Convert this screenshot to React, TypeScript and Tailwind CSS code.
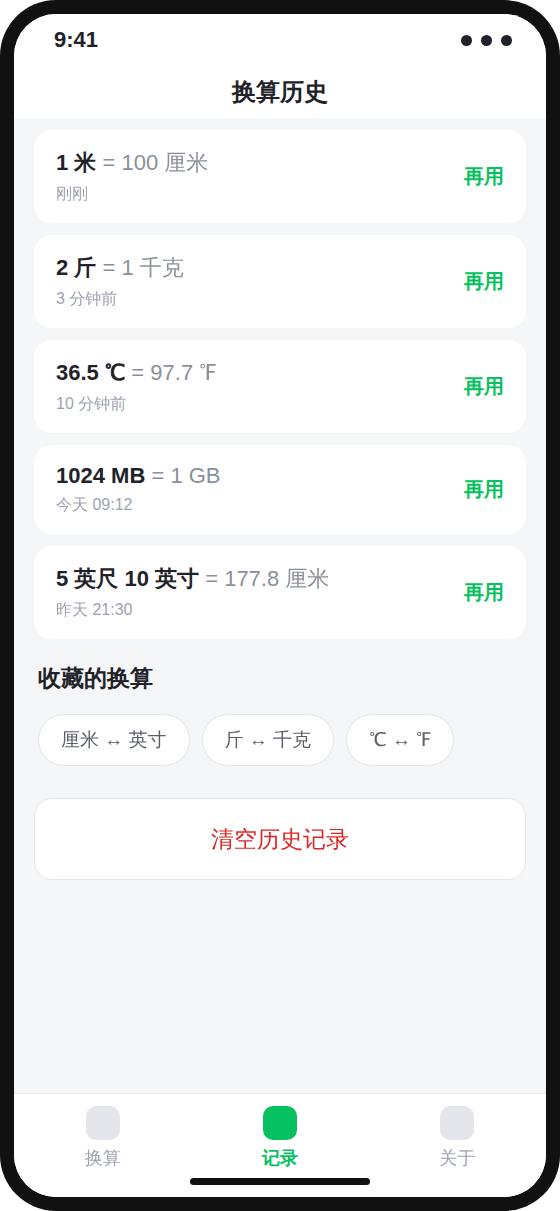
import React from "react";

const records = [
  { from: "1 米", to: "100 厘米", time: "刚刚" },
  { from: "2 斤", to: "1 千克", time: "3 分钟前" },
  { from: "36.5", unit: "℃", to: "97.7 ℉", time: "10 分钟前" },
  { from: "1024 MB", to: "1 GB", time: "今天 09:12" },
  { from: "5 英尺 10 英寸", to: "177.8 厘米", time: "昨天 21:30" },
];

const favorites = ["厘米 ↔ 英寸", "斤 ↔ 千克", "℃ ↔ ℉"];

const tabs = [
  { label: "换算", active: false },
  { label: "记录", active: true },
  { label: "关于", active: false },
];

const StatusBar = () => {
  return (
    <div className="flex h-[52px] items-center justify-between pl-10 pr-[34px]">
      <span className="text-[22px] font-semibold leading-[normal]">9:41</span>
      <div className="flex gap-[9px]">
        <span className="size-[11px] rounded-full bg-[#1f2329]" />
        <span className="size-[11px] rounded-full bg-[#1f2329]" />
        <span className="size-[11px] rounded-full bg-[#1f2329]" />
      </div>
    </div>
  );
};

type RecordProps = { from: string; unit?: string; to: string; time: string };

const RecordCard = ({ from, unit, to, time }: RecordProps) => {
  return (
    <div className="flex items-center justify-between rounded-[18px] bg-white px-[22px] py-[18px]">
      <div>
        <p className="font-['Liberation_Sans','WenQuanYi_Zen_Hei',sans-serif] text-[22px] leading-[normal] text-[#8a8f99]">
          <b className="font-['Liberation_Sans',sans-serif] font-bold text-[#1f2329]">
            {from}
            {unit && (
              <span className="font-['Liberation_Sans','WenQuanYi_Zen_Hei',sans-serif] [-webkit-text-stroke:0.9px]">
                {" "}
                {unit}
              </span>
            )}
          </b>{" "}
          = {to}
        </p>
        <p className="mt-1.5 font-['Liberation_Sans','WenQuanYi_Zen_Hei',sans-serif] text-base leading-[normal] text-[#9ca3af]">
          {time}
        </p>
      </div>
      <button className="text-xl font-semibold leading-[normal] text-[#07c160]">再用</button>
    </div>
  );
};

const App = () => {
  return (
    <div className="h-[1211px] w-[560px] rounded-[56px] bg-[#111] p-[14px] font-['Liberation_Sans',sans-serif] leading-[normal] text-[#1f2329]">
      <div className="flex h-full flex-col overflow-hidden rounded-[42px] bg-[#f5f6f8]">
        <header className="h-[104px] bg-white">
          <StatusBar />
          <h1 className="flex h-[52px] items-center justify-center text-2xl font-semibold leading-[normal]">换算历史</h1>
        </header>

        <main className="flex-1 px-5 pt-3">
          <div className="flex flex-col gap-3">
            {records.map((record) => (
              <RecordCard key={record.from} {...record} />
            ))}
          </div>

          <h2 className="mt-[22px] px-1 text-[23px] font-semibold leading-[34px]">收藏的换算</h2>
          <div className="mt-[19px] flex gap-3 px-1 font-['Liberation_Sans','WenQuanYi_Zen_Hei',sans-serif]">
            {favorites.map((item) => (
              <span
                key={item}
                className="flex h-[52px] items-center rounded-full border border-[#e5e6eb] bg-white px-[22px] text-[19px] text-[#5a5f69]"
              >
                {item}
              </span>
            ))}
          </div>

          <button className="mt-8 h-[82px] w-full rounded-[18px] border border-[#e5e6eb] bg-white font-['Liberation_Sans','WenQuanYi_Zen_Hei',sans-serif] text-[23px] text-[#dc2626]">
            清空历史记录
          </button>
        </main>

        <nav className="relative flex h-[104px] border-t border-[#ebedf0] bg-white pt-3">
          {tabs.map((tab) => (
            <div key={tab.label} className="flex flex-1 flex-col items-center gap-[5px]">
              <span className={`size-[34px] rounded-[10px] ${tab.active ? "bg-[#07c160]" : "bg-[#e5e6eb]"}`} />
              <span
                className={`text-[18px] leading-[27px] ${
                  tab.active
                    ? "font-semibold text-[#07c160]"
                    : "font-['Liberation_Sans','WenQuanYi_Zen_Hei',sans-serif] text-[#9ca3af]"
                }`}
              >
                {tab.label}
              </span>
            </div>
          ))}
          <div className="absolute bottom-3 left-1/2 h-[7px] w-[180px] -translate-x-1/2 rounded-full bg-[#111]" />
        </nav>
      </div>
    </div>
  );
};

export default App;
